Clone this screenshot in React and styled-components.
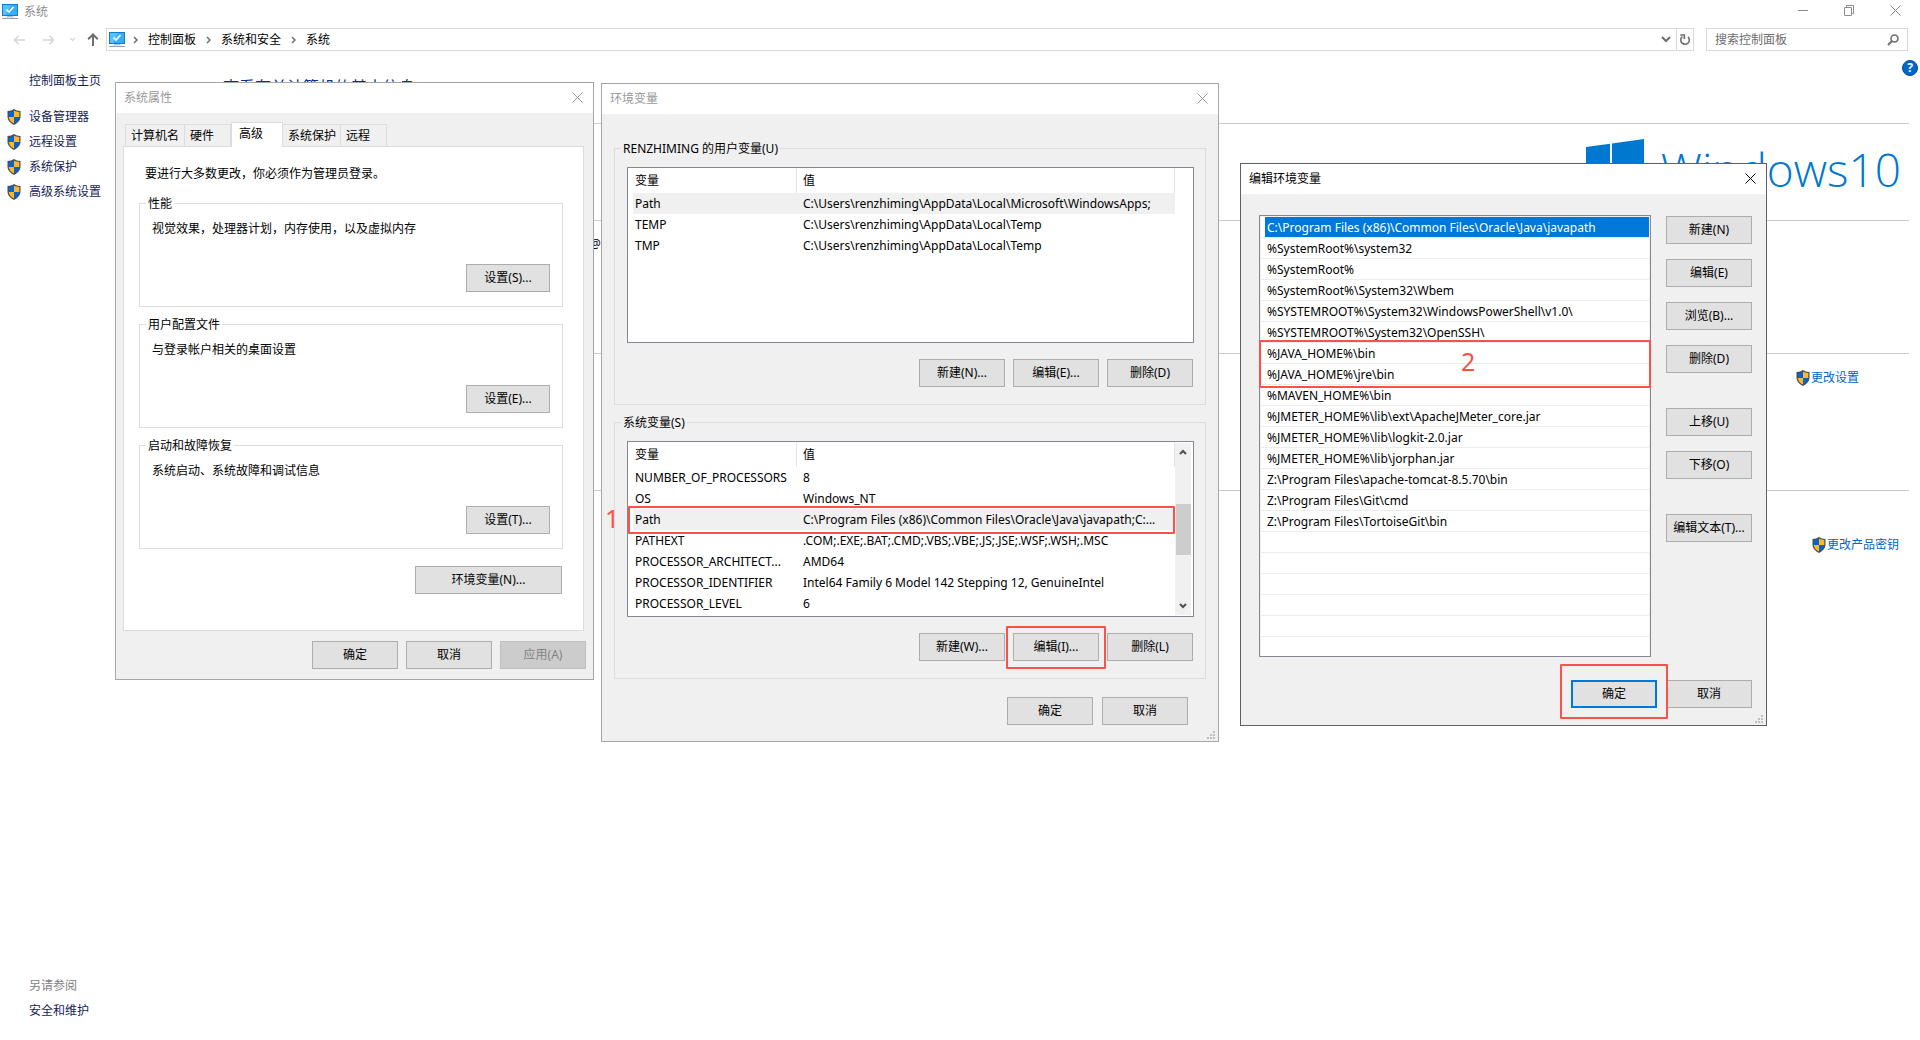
import React from 'react';
import styled, { createGlobalStyle } from 'styled-components'

const GlobalStyle = createGlobalStyle`
    * {
        box-sizing: border-box;
    }
    body {
        margin: 0;
        background: #fff;
        color: #000;
        font-family: "Noto Sans", "Noto Sans CJK SC", sans-serif;
        font-size: 12px;
        line-height: 16px;
    }
    button, input {
        font: inherit;
        color: inherit;
    }
    h1, h2, p, ul {
        margin: 0;
        padding: 0;
        font-weight: 400;
    }
`

const userVars = [
    ['Path', 'C:\\Users\\renzhiming\\AppData\\Local\\Microsoft\\WindowsApps;'],
    ['TEMP', 'C:\\Users\\renzhiming\\AppData\\Local\\Temp'],
    ['TMP', 'C:\\Users\\renzhiming\\AppData\\Local\\Temp'],
]

const systemVars = [
    ['NUMBER_OF_PROCESSORS', '8'],
    ['OS', 'Windows_NT'],
    ['Path', 'C:\\Program Files (x86)\\Common Files\\Oracle\\Java\\javapath;C:...'],
    ['PATHEXT', '.COM;.EXE;.BAT;.CMD;.VBS;.VBE;.JS;.JSE;.WSF;.WSH;.MSC'],
    ['PROCESSOR_ARCHITECT...', 'AMD64'],
    ['PROCESSOR_IDENTIFIER', 'Intel64 Family 6 Model 142 Stepping 12, GenuineIntel'],
    ['PROCESSOR_LEVEL', '6'],
]

const paths = [
    'C:\\Program Files (x86)\\Common Files\\Oracle\\Java\\javapath',
    '%SystemRoot%\\system32',
    '%SystemRoot%',
    '%SystemRoot%\\System32\\Wbem',
    '%SYSTEMROOT%\\System32\\WindowsPowerShell\\v1.0\\',
    '%SYSTEMROOT%\\System32\\OpenSSH\\',
    '%JAVA_HOME%\\bin',
    '%JAVA_HOME%\\jre\\bin',
    '%MAVEN_HOME%\\bin',
    '%JMETER_HOME%\\lib\\ext\\ApacheJMeter_core.jar',
    '%JMETER_HOME%\\lib\\logkit-2.0.jar',
    '%JMETER_HOME%\\lib\\jorphan.jar',
    'Z:\\Program Files\\apache-tomcat-8.5.70\\bin',
    'Z:\\Program Files\\Git\\cmd',
    'Z:\\Program Files\\TortoiseGit\\bin',
]

const tabs = [
    ['计算机名', 60],
    ['硬件', 46],
    ['高级', 52],
    ['系统保护', 58],
    ['远程', 46],
]

const groups = [
    ['性能', '视觉效果，处理器计划，内存使用，以及虚拟内存', '设置(S)...'],
    ['用户配置文件', '与登录帐户相关的桌面设置', '设置(E)...'],
    ['启动和故障恢复', '系统启动、系统故障和调试信息', '设置(T)...'],
]

function Shield() {
    return (
        <svg width="14" height="16" viewBox="0 0 14 16">
            <path d="M7 0C5.300 1.300 3 2 0.500 2V7.500C0.500 11.500 3.500 14.300 7 16C10.500 14.300 13.500 11.500 13.500 7.500V2C11 2 8.700 1.300 7 0Z" fill="#4d4d4d" />
            <path d="M7 1.600C5.400 2.600 3.600 3 1.700 3.100V8H7Z" fill="#0a63c9" />
            <path d="M7 1.600C8.600 2.600 10.400 3 12.300 3.100V8H7Z" fill="#fdb92e" />
            <path d="M1.700 8C2 11 4.300 13.200 7 14.600V8Z" fill="#fdb92e" />
            <path d="M12.300 8C12 11 9.700 13.200 7 14.600V8Z" fill="#0a63c9" />
        </svg>
    )
}

function Computer() {
    return (
        <svg width="16" height="16" viewBox="0 0 16 16">
            <path d="M0 0H16V12H0Z" fill="#1979ca" />
            <path d="M1 1H15V11H1Z" fill="#55c2fb" />
            <path d="M9 1H15V11H4Z" fill="#35aef5" />
            <path d="M4.500 5.500L7 8L11.500 3" fill="none" stroke="#fff" strokeWidth="1.600" />
            <path d="M5 12H11V13H5Z" fill="#a9c1d3" />
            <path d="M3 13H13V14H3Z" fill="#dfe8ee" />
            <path d="M0 14H16V15H0Z" fill="#8aa5b9" />
        </svg>
    )
}

function Cross({ size = 11 }) {
    return (
        <svg width={size} height={size} viewBox="0 0 11 11">
            <path d="M0.500 0.500L10.500 10.500M10.500 0.500L0.500 10.500" fill="none" stroke="currentColor" />
        </svg>
    )
}

function Chevron({ d = 'M1 1L4 4L1 7', w = 5, h = 8, stroke = 1.5 }) {
    return (
        <svg width={w} height={h} viewBox={`0 0 ${w} ${h}`}>
            <path d={d} fill="none" stroke="currentColor" strokeWidth={stroke} />
        </svg>
    )
}

function Grip() {
    return (
        <GripIcon width="8" height="8" viewBox="0 0 8 8">
            <path d="M6 0h2v2h-2zM3 3h2v2h-2zM6 3h2v2h-2zM0 6h2v2h-2zM3 6h2v2h-2zM6 6h2v2h-2z" fill="#bfbfbf" />
        </GripIcon>
    )
}

function VarTable({ label, rows, selected, marked }) {
    return (
        <Table aria-label={label}>
            <thead>
                <tr>
                    <NameHead>变量</NameHead>
                    <ValueHead>值</ValueHead>
                </tr>
            </thead>
            <tbody>
                {rows.map(([name, value], i) => (
                    <VarRow key={name} $selected={i === selected}>
                        <NameCell>
                            {name}
                            {marked && i === selected && (
                                <RowMark><Digit>1</Digit></RowMark>
                            )}
                        </NameCell>
                        <ValueCell>{value}</ValueCell>
                    </VarRow>
                ))}
            </tbody>
        </Table>
    )
}

function Explorer() {
    return (
        <>
            <TitleBar>
                <Computer />
                <WindowTitle>系统</WindowTitle>
                <WindowButton aria-label="最小化">
                    <svg width="11" height="11" viewBox="0 0 11 11"><path d="M0 5.500H10" stroke="currentColor" /></svg>
                </WindowButton>
                <WindowButton aria-label="还原">
                    <svg width="11" height="11" viewBox="0 0 11 11"><path d="M0.500 2.500H7.500V10.500H0.500ZM2.500 2.500V0.500H9.500V8.500H7.500" fill="none" stroke="currentColor" /></svg>
                </WindowButton>
                <WindowButton aria-label="关闭"><Cross /></WindowButton>
            </TitleBar>
            <Toolbar>
                <NavButtons>
                    <NavButton aria-label="后退" disabled>
                        <svg width="12" height="10" viewBox="0 0 12 10"><path d="M12 5H1.500M5.500 1L1.500 5L5.500 9" fill="none" stroke="currentColor" strokeWidth="1.500" /></svg>
                    </NavButton>
                    <NavButton aria-label="前进" disabled $gap={18}>
                        <svg width="12" height="10" viewBox="0 0 12 10"><path d="M0 5H10.500M6.500 1L10.500 5L6.500 9" fill="none" stroke="currentColor" strokeWidth="1.500" /></svg>
                    </NavButton>
                    <NavButton aria-label="最近" disabled $gap={14}>
                        <Chevron d="M1 1L3.500 3.500L6 1" w={7} h={5} stroke={1.2} />
                    </NavButton>
                    <NavButton aria-label="上移一级" $gap={11}>
                        <svg width="12" height="13" viewBox="0 0 12 13"><path d="M6 13V1.500M1.200 6.300L6 1.500L10.800 6.300" fill="none" stroke="currentColor" strokeWidth="2" /></svg>
                    </NavButton>
                </NavButtons>
                <Address>
                    <AddressIcon><Computer /></AddressIcon>
                    <Chevron />
                    <Crumb href="#panel">控制面板</Crumb>
                    <Chevron />
                    <Crumb href="#security">系统和安全</Crumb>
                    <Chevron />
                    <Crumb href="#system">系统</Crumb>
                    <AddressButton aria-label="历史记录" $push>
                        <Chevron d="M1 1L5 5L9 1" w={10} h={7} stroke={2} />
                    </AddressButton>
                    <AddressButton aria-label="刷新" $line>
                        <svg width="12" height="12" viewBox="0 0 12 12"><path d="M9 2.800A4.300 4.300 0 1 1 3.300 2.700" fill="none" stroke="currentColor" strokeWidth="1.600" /><path d="M1.300 1H5.300V5" fill="none" stroke="currentColor" strokeWidth="1.600" /></svg>
                    </AddressButton>
                </Address>
                <Search>
                    <SearchInput aria-label="搜索控制面板" placeholder="搜索控制面板" />
                    <svg width="12" height="12" viewBox="0 0 12 12"><circle cx="7.500" cy="4.500" r="3.500" fill="none" stroke="#6d6d6d" strokeWidth="1.600" /><path d="M5 7L1 11" stroke="#6d6d6d" strokeWidth="2" /></svg>
                </Search>
            </Toolbar>
            <Content>
                <Sidebar>
                    <SideHome href="#home">控制面板主页</SideHome>
                    <SideLink href="#devices"><Shield />设备管理器</SideLink>
                    <SideLink href="#remote"><Shield />远程设置</SideLink>
                    <SideLink href="#protect"><Shield />系统保护</SideLink>
                    <SideLink href="#advanced"><Shield />高级系统设置</SideLink>
                    <SeeAlso>另请参阅</SeeAlso>
                    <SidePlain href="#maintenance">安全和维护</SidePlain>
                </Sidebar>
                <Main>
                    <Help aria-label="帮助">?</Help>
                    <Headline>查看有关计算机的基本信息</Headline>
                    <Edition>
                        <svg width="59" height="59" viewBox="0 0 59 59">
                            <path d="M0 8L24 4.800V28.500H0ZM26 4.500L58 0V28.500H26ZM0 31H24V54.500L0 51ZM26 31H58V59L26 54.800Z" fill="#0078cf" />
                        </svg>
                        <Brand>Windows<span>10</span></Brand>
                    </Edition>
                    <Processor>@</Processor>
                    <Computername><Action href="#change"><Shield />更改设置</Action></Computername>
                    <Activation><Action href="#key"><Shield />更改产品密钥</Action></Activation>
                </Main>
            </Content>
        </>
    )
}

function SystemProperties() {
    return (
        <PropertiesDialog aria-label="系统属性">
            <DialogTitle>系统属性<CloseButton aria-label="关闭"><Cross /></CloseButton></DialogTitle>
            <Tabs role="tablist">
                {tabs.map(([name, width], i) => (
                    <Tab key={name} role="tab" $width={width} $active={i === 2} aria-selected={i === 2}>{name}</Tab>
                ))}
            </Tabs>
            <TabPanel role="tabpanel">
                <Notice>要进行大多数更改，你必须作为管理员登录。</Notice>
                {groups.map(([title, text, button]) => (
                    <SettingGroup key={title}>
                        <Legend>{title}</Legend>
                        <p>{text}</p>
                        <SettingButton>{button}</SettingButton>
                    </SettingGroup>
                ))}
                <EnvButton>环境变量(N)...</EnvButton>
            </TabPanel>
            <PropertiesFooter>
                <Button>确定</Button>
                <Button>取消</Button>
                <Button disabled>应用(A)</Button>
            </PropertiesFooter>
        </PropertiesDialog>
    )
}

function EnvironmentVariables() {
    return (
        <VariablesDialog aria-label="环境变量">
            <DialogTitle>环境变量<CloseButton aria-label="关闭"><Cross /></CloseButton></DialogTitle>
            <VariablesBody>
                <VarGroup>
                    <Legend>RENZHIMING 的用户变量(U)</Legend>
                    <ListBox>
                        <VarTable label="用户变量" rows={userVars} selected={0} />
                    </ListBox>
                    <ButtonRow>
                        <Button>新建(N)...</Button>
                        <Button>编辑(E)...</Button>
                        <Button>删除(D)</Button>
                    </ButtonRow>
                </VarGroup>
                <VarGroup>
                    <Legend>系统变量(S)</Legend>
                    <ListBox>
                        <VarTable label="系统变量" rows={systemVars} selected={2} marked />
                        <ScrollBar>
                            <Chevron d="M1 5L4 2L7 5" w={8} h={7} stroke={2} />
                            <Thumb />
                            <Chevron d="M1 2L4 5L7 2" w={8} h={7} stroke={2} />
                        </ScrollBar>
                    </ListBox>
                    <ButtonRow>
                        <Button>新建(W)...</Button>
                        <Marked><Button>编辑(I)...</Button></Marked>
                        <Button>删除(L)</Button>
                    </ButtonRow>
                </VarGroup>
                <VariablesFooter>
                    <Button>确定</Button>
                    <Button>取消</Button>
                </VariablesFooter>
            </VariablesBody>
            <Grip />
        </VariablesDialog>
    )
}

function EditVariable() {
    return (
        <EditDialog aria-label="编辑环境变量">
            <DialogTitle $active>编辑环境变量<CloseButton aria-label="关闭"><Cross /></CloseButton></DialogTitle>
            <EditBody>
                <PathList>
                    {paths.map((path, i) => (
                        <PathItem key={path} $selected={i === 0}>{path}</PathItem>
                    ))}
                    <PathMark><Digit $inside>2</Digit></PathMark>
                </PathList>
                <ButtonColumn>
                    <Button>新建(N)</Button>
                    <Button>编辑(E)</Button>
                    <Button>浏览(B)...</Button>
                    <Button>删除(D)</Button>
                    <SpacedButton>上移(U)</SpacedButton>
                    <Button>下移(O)</Button>
                    <SpacedButton>编辑文本(T)...</SpacedButton>
                </ButtonColumn>
            </EditBody>
            <EditFooter>
                <Marked $large><DefaultButton>确定</DefaultButton></Marked>
                <Button>取消</Button>
            </EditFooter>
            <Grip />
        </EditDialog>
    )
}

export default function App() {
    return (
        <Desktop>
            <GlobalStyle />
            <Explorer />
            <SystemProperties />
            <EnvironmentVariables />
            <EditVariable />
        </Desktop>
    );
}

const Desktop = styled.div`
    position: relative;
    display: flex;
    flex-direction: column;
    min-height: 100vh;
    overflow: hidden;
`

const TitleBar = styled.header`
    display: flex;
    align-items: center;
    height: 24px;
    padding-left: 2px;
    color: #8c8c8c;
`

const WindowTitle = styled.h1`
    flex: 1;
    margin-left: 6px;
    font-size: 12px;
    line-height: 16px;
`

const WindowButton = styled.button`
    display: flex;
    align-items: center;
    justify-content: center;
    width: 46px;
    height: 20px;
    margin-bottom: 4px;
    padding: 0;
    border: none;
    background: none;
    color: #8c8c8c;

    &:last-child {
        margin-right: 2px;
    }
`

const Toolbar = styled.nav`
    display: flex;
    padding: 4px 12px 0 0;
`

const NavButtons = styled.div`
    display: flex;
    align-items: center;
    width: 106px;
    padding-left: 13px;
`

const NavButton = styled.button`
    display: flex;
    margin-left: ${props => props.$gap || 0}px;
    padding: 0;
    border: none;
    background: none;
    color: #6d6d6d;

    &:disabled {
        color: #d5d5d5;
    }
`

const Address = styled.div`
    display: flex;
    flex: 1;
    align-items: center;
    gap: 10px;
    height: 23px;
    padding-left: 2px;
    border: 1px solid #d9d9d9;
    color: #6d6d6d;
`

const AddressIcon = styled.span`
    display: flex;
    margin-right: -2px;
`

const Crumb = styled.a`
    color: #000;
    text-decoration: none;
`

const AddressButton = styled.button`
    display: flex;
    align-items: center;
    justify-content: center;
    width: 17px;
    height: 21px;
    padding: 0;
    border: none;
    border-left: ${props => (props.$line ? '1px solid #d9d9d9' : 'none')};
    background: none;
    margin-left: ${props => (props.$push ? 'auto' : '-8px')};
`

const Search = styled.div`
    display: flex;
    align-items: center;
    width: 202px;
    height: 23px;
    margin-left: 12px;
    padding: 0 8px;
    border: 1px solid #d9d9d9;
`

const SearchInput = styled.input`
    flex: 1;
    min-width: 0;
    padding: 0;
    border: none;
    outline: none;

    &::placeholder {
        color: #6d6d6d;
        opacity: 1;
    }
`

const Content = styled.div`
    display: flex;
    flex: 1;
`

const Sidebar = styled.aside`
    display: flex;
    flex-direction: column;
    gap: 9px;
    width: 223px;
    padding: 22px 0 21px 7px;
    color: #151c55;
`

const SideLink = styled.a`
    display: flex;
    align-items: center;
    gap: 8px;
    color: inherit;
    text-decoration: none;
`

const SidePlain = styled(SideLink)`
    padding-left: 22px;
`

const SideHome = styled(SidePlain)`
    margin-bottom: 11px;
`

const SeeAlso = styled.p`
    margin-top: auto;
    padding-left: 22px;
    color: #808080;
`

const Main = styled.main`
    flex: 1;
    padding: 24px 11px 0 0;
    position: relative;
`

const Help = styled.button`
    position: absolute;
    top: 9px;
    right: 2px;
    width: 16px;
    height: 16px;
    padding: 0;
    border: 1px solid #004a93;
    border-radius: 50%;
    background: #0067cc;
    color: #fff;
    font-weight: 700;
    line-height: 14px;
`

const Headline = styled.h2`
    color: #003399;
    font-size: 16px;
    line-height: 24px;
`

const Edition = styled.section`
    display: flex;
    justify-content: flex-end;
    gap: 16px;
    height: 98px;
    margin-top: 24px;
    padding: 15px 8px 0 0;
    border-top: 1px solid #cccccc;
    border-bottom: 1px solid #cccccc;
`

const Brand = styled.div`
    display: flex;
    color: #0078cf;
    font-family: "Open Sans", sans-serif;
    font-size: 46px;
    font-weight: 300;
    line-height: 60px;
`

const Processor = styled.section`
    height: 133px;
    padding: 15px 0 0 367px;
    border-bottom: 1px solid #cccccc;
`

const Computername = styled.section`
    display: flex;
    justify-content: flex-end;
    height: 137px;
    padding: 16px 50px 0 0;
    border-bottom: 1px solid #cccccc;
`

const Activation = styled.section`
    display: flex;
    justify-content: flex-end;
    padding: 46px 10px 0 0;
`

const Action = styled.a`
    display: flex;
    gap: 1px;
    height: 16px;
    color: #0066cc;
    text-decoration: none;
`

const Dialog = styled.section`
    position: absolute;
    border: 1px solid #a6a6a6;
    background: #f0f0f0;
`

const PropertiesDialog = styled(Dialog)`
    top: 82px;
    left: 115px;
    width: 479px;
`

const VariablesDialog = styled(Dialog)`
    top: 83px;
    left: 601px;
    width: 618px;
`

const EditDialog = styled(Dialog)`
    top: 163px;
    left: 1240px;
    width: 527px;
    border-color: #606060;
`

const DialogTitle = styled.h2`
    display: flex;
    align-items: center;
    justify-content: space-between;
    height: 30px;
    padding: 0 10px 0 8px;
    background: #fff;
    color: ${props => (props.$active ? '#000' : '#999')};
    font-size: 12px;
`

const CloseButton = styled.button`
    display: flex;
    margin-bottom: 2px;
    padding: 0;
    border: none;
    background: none;
`

const Button = styled.button`
    width: 86px;
    height: 28px;
    padding: 0;
    border: 1px solid #adadad;
    background: #e1e1e1;
    white-space: nowrap;

    &:disabled {
        border-color: #bfbfbf;
        background: #cccccc;
        color: #838383;
    }
`

const DefaultButton = styled(Button)`
    border: 2px solid #0078d7;
`

const SpacedButton = styled(Button)`
    margin-top: 20px;
`

const ButtonRow = styled.div`
    display: flex;
    justify-content: flex-end;
    gap: 8px;
    margin: 16px 1px 0 0;
`

const Tabs = styled.div`
    display: flex;
    align-items: flex-end;
    height: 33px;
    padding-left: 9px;
`

const Tab = styled.button`
    width: ${props => props.$width}px;
    height: ${props => (props.$active ? '25px' : '22px')};
    margin-bottom: ${props => (props.$active ? '-1px' : '0')};
    padding: ${props => (props.$active ? '0 0 3px 7px' : '0 0 0 5px')};
    border: 1px solid #dcdcdc;
    border-bottom: none;
    background: ${props => (props.$active ? '#fff' : '#f0f0f0')};
    text-align: left;
    z-index: ${props => (props.$active ? 1 : 0)};

    &:not(:first-child) {
        border-left-width: ${props => (props.$active ? '1px' : '0')};
    }
`

const TabPanel = styled.div`
    display: flex;
    flex-direction: column;
    gap: 9px;
    margin: 0 9px 0 7px;
    padding: 19px 20px 36px 15px;
    border: 1px solid #dcdcdc;
    background: #fff;
`

const Notice = styled.p`
    padding: 0 0 4px 6px;
`

const Group = styled.fieldset`
    margin: 0;
    min-width: 0;
    border: 1px solid #dcdcdc;
`

const SettingGroup = styled(Group)`
    padding: 9px 12px 14px 12px;
`

const Legend = styled.legend`
    margin-left: -6px;
    padding: 1px 2px 0;
`

const SettingButton = styled(Button)`
    display: block;
    width: 84px;
    margin: 27px 0 0 auto;
`

const EnvButton = styled(Button)`
    align-self: flex-end;
    width: 147px;
    margin: 8px 1px 0 0;
`

const PropertiesFooter = styled(ButtonRow)`
    margin: 10px 7px 10px 0;
`

const VariablesBody = styled.div`
    display: flex;
    flex-direction: column;
    gap: 9px;
    padding: 26px 12px 16px;
`

const VarGroup = styled(Group)`
    padding: 10px 11px 17px 12px;
`

const ListBox = styled.div`
    display: flex;
    align-items: flex-start;
    justify-content: space-between;
    height: 176px;
    padding: 0 2px 0 5px;
    border: 1px solid #828790;
    background: #fff;
`

const Table = styled.table`
    width: 542px;
    table-layout: fixed;
    border-collapse: separate;
    border-spacing: 0;
`

const NameHead = styled.th`
    width: 164px;
    height: 25px;
    padding: 0 2px;
    border-right: 1px solid #e5e5e5;
    font-weight: 400;
    text-align: left;
`

const ValueHead = styled(NameHead)`
    width: auto;
    padding: 0 6px;
`

const VarRow = styled.tr`
    height: 21px;
    background: ${props => (props.$selected ? '#f0f0f0' : 'none')};
`

const NameCell = styled.td`
    position: relative;
    padding: 0 2px;
    white-space: nowrap;
`

const ValueCell = styled.td`
    padding: 0 6px;
    white-space: nowrap;
`

const Mark = styled.span`
    position: absolute;
    border: 2px solid #fb5149;
    border-radius: 1px;
    pointer-events: none;
`

const RowMark = styled(Mark)`
    top: -3px;
    left: -5px;
    width: 547px;
    height: 28px;
`

const PathMark = styled(Mark)`
    top: 124px;
    left: -1px;
    right: -1px;
    height: 48px;
`

const Digit = styled.span`
    position: absolute;
    top: ${props => (props.$inside ? '5px' : '-4px')};
    left: ${props => (props.$inside ? '200px' : '-25px')};
    color: #fb5149;
    font-size: 25px;
    line-height: 28px;
`

const Marked = styled.div`
    position: relative;
    display: flex;

    &::after {
        content: '';
        position: absolute;
        inset: ${props => (props.$large ? '-16px -11px -11px' : '-7px -7px -8px')};
        border: 2px solid #fb5149;
        border-radius: 1px;
        pointer-events: none;
    }
`

const ScrollBar = styled.div`
    display: flex;
    flex-direction: column;
    align-items: center;
    width: 16px;
    height: 172px;
    margin-top: 1px;
    padding: 6px 0;
    background: #f0f0f0;
    color: #505050;
`

const Thumb = styled.div`
    width: 15px;
    height: 51px;
    margin: 48px 0 auto;
    background: #cdcdcd;
`

const VariablesFooter = styled(ButtonRow)`
    gap: 9px;
    margin: 9px 18px 0 0;
`

const EditBody = styled.div`
    display: flex;
    gap: 15px;
    padding: 21px 14px 0 18px;
`

const PathList = styled.ul`
    position: relative;
    flex: 1;
    height: 442px;
    padding: 1px 1px 0;
    border: 1px solid #828790;
    background: #fff repeating-linear-gradient(#fff 0 20px, #ececec 20px 21px) content-box;
    list-style: none;
`

const PathItem = styled.li`
    height: 20px;
    margin: 0 0 1px 4px;
    padding-left: 2px;
    line-height: 21px;
    background: ${props => (props.$selected ? '#0078d7' : 'none')};
    color: ${props => (props.$selected ? '#fff' : '#000')};
`

const ButtonColumn = styled.div`
    display: flex;
    flex-direction: column;
    gap: 15px;
    padding-top: 1px;
`

const EditFooter = styled(ButtonRow)`
    gap: 9px;
    margin: 23px 14px 17px 0;
`

const GripIcon = styled.svg`
    position: absolute;
    right: 3px;
    bottom: 2px;
`
